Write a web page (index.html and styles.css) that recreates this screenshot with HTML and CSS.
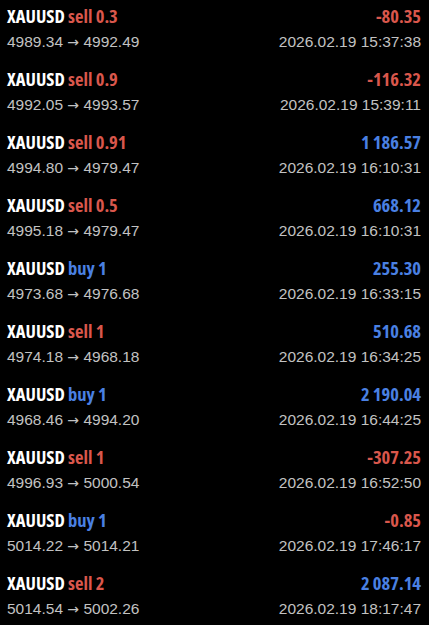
FILE: index.html
```html
<!DOCTYPE html>
<html lang="en">
<head>
  <meta charset="UTF-8" />
  <title>History</title>
  <link rel="stylesheet" href="styles.css">
</head>
<body>
  <div class="list">
    <div class="row">
      <div class="top"><span class="sym">XAUUSD <span class="sell">sell 0.3</span></span><span class="sell">-80.35</span></div>
      <div class="bottom"><span>4989.34 <span class="arrow">→</span> 4992.49</span><span>2026.02.19 15:37:38</span></div>
    </div>
    <div class="row">
      <div class="top"><span class="sym">XAUUSD <span class="sell">sell 0.9</span></span><span class="sell">-116.32</span></div>
      <div class="bottom"><span>4992.05 <span class="arrow">→</span> 4993.57</span><span>2026.02.19 15:39:11</span></div>
    </div>
    <div class="row">
      <div class="top"><span class="sym">XAUUSD <span class="sell">sell 0.91</span></span><span class="buy">1 186.57</span></div>
      <div class="bottom"><span>4994.80 <span class="arrow">→</span> 4979.47</span><span>2026.02.19 16:10:31</span></div>
    </div>
    <div class="row">
      <div class="top"><span class="sym">XAUUSD <span class="sell">sell 0.5</span></span><span class="buy">668.12</span></div>
      <div class="bottom"><span>4995.18 <span class="arrow">→</span> 4979.47</span><span>2026.02.19 16:10:31</span></div>
    </div>
    <div class="row">
      <div class="top"><span class="sym">XAUUSD <span class="buy">buy 1</span></span><span class="buy">255.30</span></div>
      <div class="bottom"><span>4973.68 <span class="arrow">→</span> 4976.68</span><span>2026.02.19 16:33:15</span></div>
    </div>
    <div class="row">
      <div class="top"><span class="sym">XAUUSD <span class="sell">sell 1</span></span><span class="buy">510.68</span></div>
      <div class="bottom"><span>4974.18 <span class="arrow">→</span> 4968.18</span><span>2026.02.19 16:34:25</span></div>
    </div>
    <div class="row">
      <div class="top"><span class="sym">XAUUSD <span class="buy">buy 1</span></span><span class="buy">2 190.04</span></div>
      <div class="bottom"><span>4968.46 <span class="arrow">→</span> 4994.20</span><span>2026.02.19 16:44:25</span></div>
    </div>
    <div class="row">
      <div class="top"><span class="sym">XAUUSD <span class="sell">sell 1</span></span><span class="sell">-307.25</span></div>
      <div class="bottom"><span>4996.93 <span class="arrow">→</span> 5000.54</span><span>2026.02.19 16:52:50</span></div>
    </div>
    <div class="row">
      <div class="top"><span class="sym">XAUUSD <span class="buy">buy 1</span></span><span class="sell">-0.85</span></div>
      <div class="bottom"><span>5014.22 <span class="arrow">→</span> 5014.21</span><span>2026.02.19 17:46:17</span></div>
    </div>
    <div class="row">
      <div class="top"><span class="sym">XAUUSD <span class="sell">sell 2</span></span><span class="buy">2 087.14</span></div>
      <div class="bottom"><span>5014.54 <span class="arrow">→</span> 5002.26</span><span>2026.02.19 18:17:47</span></div>
    </div>
  </div>
</body>
</html>
```

FILE: styles.css
```css
body {
  margin: 0;
  background: #000;
  font-family: 'Liberation Sans', Arial, sans-serif;
}

.list {
  padding: 0 8px 0 7px;
}

.row {
  height: 63px;
  padding-top: 5px;
  box-sizing: border-box;
}

.top, .bottom {
  display: flex;
  justify-content: space-between;
  align-items: baseline;
}

.top {
  height: 22px;
  line-height: 22px;
  font-family: 'Open Sans', sans-serif;
  font-stretch: 80%;
  font-weight: 700;
  font-size: 18.5px;
}

.sym {
  color: #fff;
}

.sell {
  color: #d9574c;
}

.buy {
  color: #4a80e3;
}

.bottom {
  margin-top: 5px;
  line-height: 20px;
  font-size: 15.5px;
  color: #c2c2c2;
}

.arrow {
  font-family: 'DejaVu Sans', sans-serif;
  font-size: 14px;
}
```
